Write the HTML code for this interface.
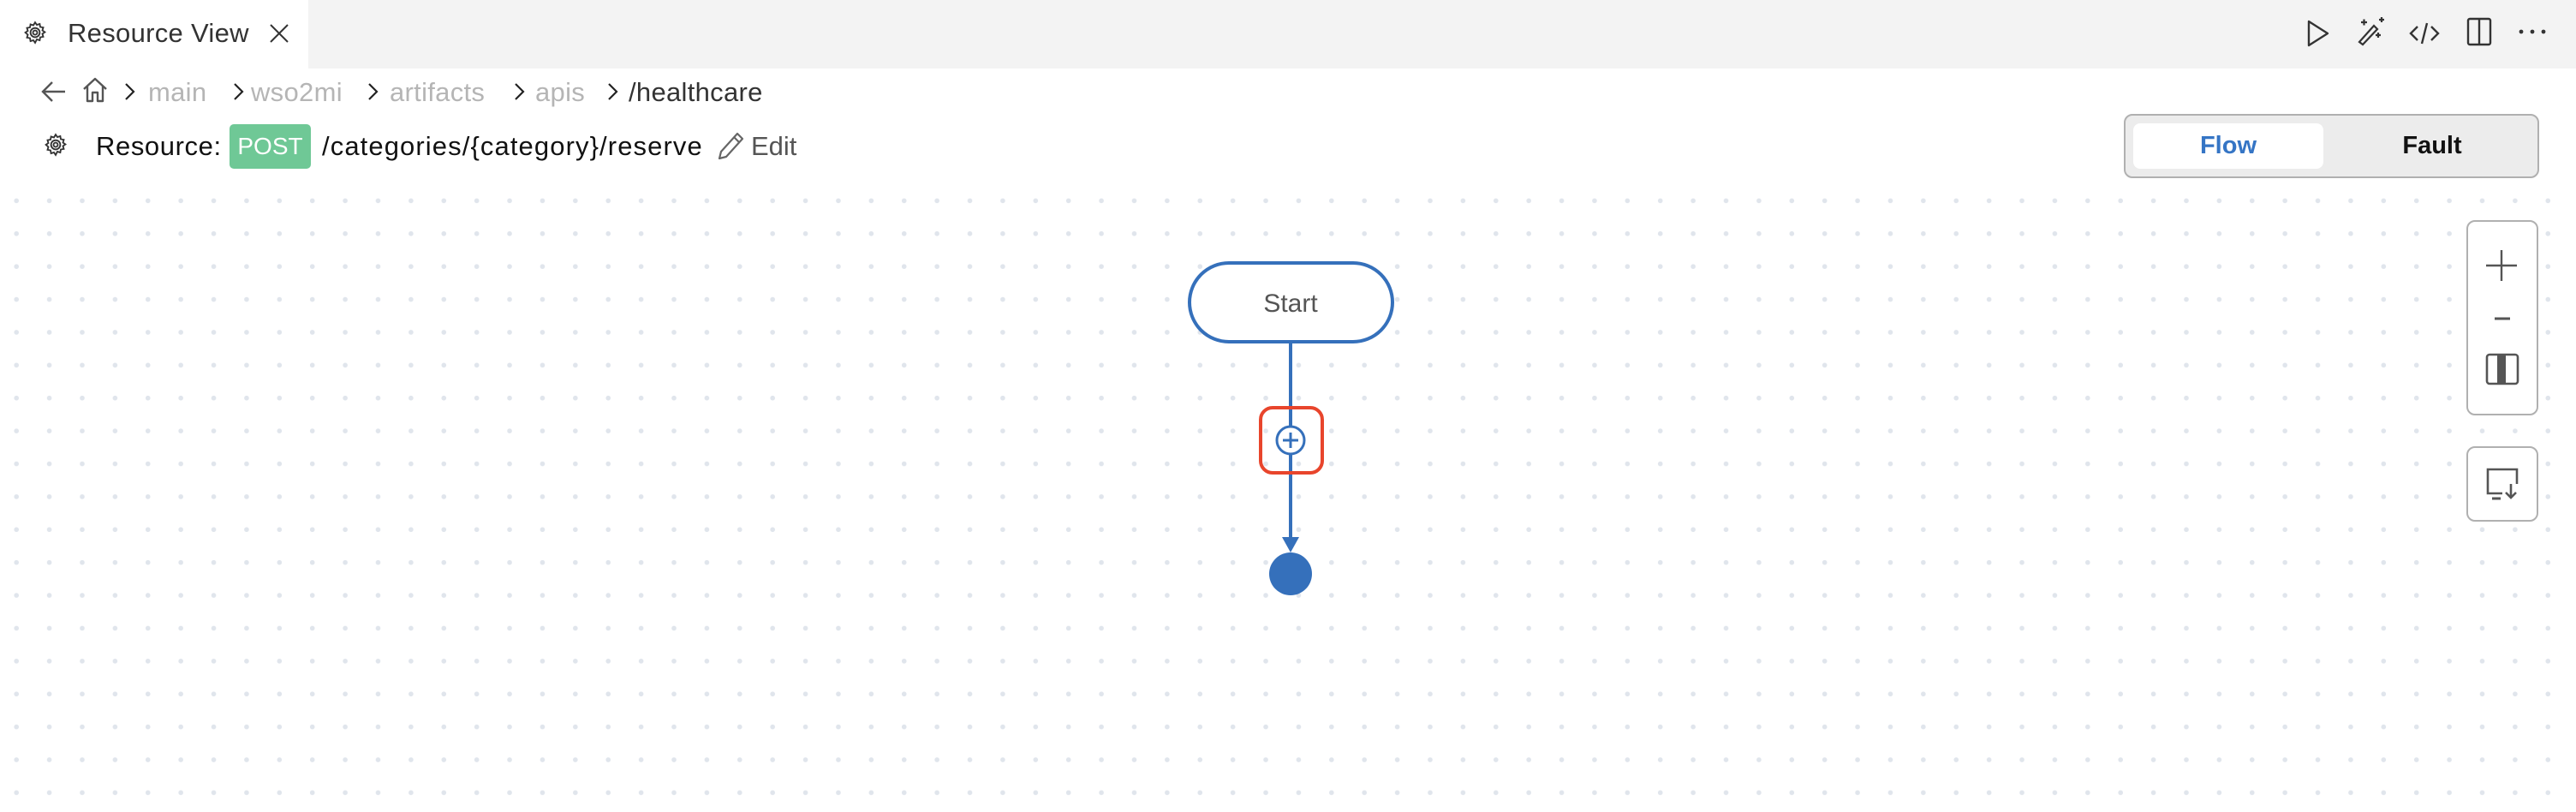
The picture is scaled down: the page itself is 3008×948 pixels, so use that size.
<!DOCTYPE html>
<html><head><meta charset="utf-8"><style>
*{margin:0;padding:0;box-sizing:border-box}
body{width:3008px;height:948px;overflow:hidden;background:#fff;font-family:"Liberation Sans",sans-serif;position:relative}
.abs{position:absolute}
#tabbar{left:0;top:0;width:3008px;height:80px;background:#f3f3f3}
#tab{left:0;top:0;width:360px;height:80px;background:#fff}
#canvas{left:0;top:216px;width:3008px;height:732px;background-image:radial-gradient(circle,#e0e5ec 2.6px,transparent 3px);background-size:38.4px 38.4px;background-position:0px -0.8px}
.t{white-space:nowrap;line-height:1}
</style></head><body>
<div id="canvas" class="abs"></div>
<div id="tabbar" class="abs"></div>
<div id="tab" class="abs"></div>
<svg class="abs" style="left:26px;top:23px" width="30" height="30" viewBox="0 0 24 24" fill="none" stroke="#333" stroke-width="1.5"><path d="M12 2.5l1.6 2.3 2.7-.8.5 2.8 2.8.5-.8 2.7 2.3 1.6-2.3 1.6.8 2.7-2.8.5-.5 2.8-2.7-.8L12 21.5l-1.6-2.3-2.7.8-.5-2.8-2.8-.5.8-2.7L2.9 12l2.3-1.6-.8-2.7 2.8-.5.5-2.8 2.7.8z"/><circle cx="12" cy="12" r="4.3"/><circle cx="12" cy="12" r="2"/></svg>
<div class="abs t" style="left:79px;top:23px;font-size:31px;color:#333;letter-spacing:0.3px">Resource View</div>
<svg class="abs" style="left:314px;top:27px" width="24" height="24" viewBox="0 0 24 24" stroke="#333" stroke-width="2"><path d="M2 2L22 22M22 2L2 22"/></svg>
<svg class="abs" style="left:2692px;top:22px" width="30" height="34" viewBox="0 0 30 34" fill="none" stroke="#333" stroke-width="2.4" stroke-linejoin="round"><path d="M4 3L26 17L4 31Z"/></svg>
<svg class="abs" style="left:2752px;top:20px" width="34" height="36" viewBox="0 0 34 36" fill="none" stroke="#333" stroke-width="2.2"><path d="M5 32L22 13L26 17L9 35Z" transform="translate(-2,-3)"/><path d="M5 6h7M8.5 2.5v7M26 3h6M29 0v6M22 21h6M25 18v6"/></svg>
<svg class="abs" style="left:2812px;top:24px" width="38" height="30" viewBox="0 0 38 30" fill="none" stroke="#333" stroke-width="2.4"><path d="M11 7L3 15L11 23M27 7L35 15L27 23M22 3L16 27"/></svg>
<svg class="abs" style="left:2880px;top:20px" width="30" height="34" viewBox="0 0 30 34" fill="none" stroke="#333" stroke-width="2.4"><rect x="2" y="2" width="26" height="30" rx="2"/><path d="M15 2V32"/></svg>
<svg class="abs" style="left:2940px;top:32px" width="34" height="10" viewBox="0 0 34 10" fill="#333"><circle cx="4" cy="5" r="2.4"/><circle cx="17" cy="5" r="2.4"/><circle cx="30" cy="5" r="2.4"/></svg>
<svg class="abs" style="left:48px;top:94px" width="30" height="26" viewBox="0 0 30 26" fill="none" stroke="#555" stroke-width="2.4"><path d="M28 13H3M13 2L2 13L13 24"/></svg>
<svg class="abs" style="left:95px;top:89px" width="32" height="32" viewBox="0 0 32 32" fill="none" stroke="#555" stroke-width="2.4" stroke-linejoin="round"><path d="M3 15L16 3L29 15M7 12V29H13V19H19V29H25V12"/></svg>
<svg class="abs" style="left:0;top:0" width="760" height="130" fill="none" stroke="#222" stroke-width="2.2">
<path d="M147 98L156 107L147 116"/><path d="M274 98L283 107L274 116"/><path d="M431 98L440 107L431 116"/><path d="M602 98L611 107L602 116"/><path d="M711 98L720 107L711 116"/>
</svg>
<div class="abs t" style="left:0;top:92px;font-size:31px;color:#b5b5b5;letter-spacing:0.3px">
<span class="abs" style="left:173px">main</span>
<span class="abs" style="left:293px">wso2mi</span>
<span class="abs" style="left:455px">artifacts</span>
<span class="abs" style="left:625px">apis</span>
<span class="abs" style="left:734px;color:#333">/healthcare</span>
</div>
<svg class="abs" style="left:50px;top:154px" width="30" height="30" viewBox="0 0 24 24" fill="none" stroke="#333" stroke-width="1.5"><path d="M12 2.5l1.6 2.3 2.7-.8.5 2.8 2.8.5-.8 2.7 2.3 1.6-2.3 1.6.8 2.7-2.8.5-.5 2.8-2.7-.8L12 21.5l-1.6-2.3-2.7.8-.5-2.8-2.8-.5.8-2.7L2.9 12l2.3-1.6-.8-2.7 2.8-.5.5-2.8 2.7.8z"/><circle cx="12" cy="12" r="4.3"/><circle cx="12" cy="12" r="2"/></svg>
<div class="abs t" style="left:112px;top:155px;font-size:31px;color:#111;letter-spacing:0.6px">Resource:</div>
<div class="abs" style="left:268px;top:145px;width:95px;height:52px;background:#6fc896;border-radius:5px;color:#fff;font-size:28px;line-height:52px;text-align:center">POST</div>
<div class="abs t" style="left:376px;top:155px;font-size:31px;color:#111;letter-spacing:1.1px">/categories/{category}/reserve</div>
<svg class="abs" style="left:836px;top:152px" width="34" height="36" viewBox="0 0 34 36" fill="none" stroke="#666" stroke-width="2.2" stroke-linejoin="round"><path d="M4 33L6 25L25 4L31 10L12 31Z M21 8L27 14"/></svg>
<div class="abs t" style="left:877px;top:155px;font-size:31px;color:#555">Edit</div>
<div class="abs" style="left:2480px;top:133px;width:485px;height:75px;border:2px solid #b0b0b0;border-radius:10px;background:#ececec"></div>
<div class="abs" style="left:2491px;top:144px;width:222px;height:53px;background:#fff;border-radius:8px"></div>
<div class="abs t" style="left:2491px;top:156px;width:222px;text-align:center;font-size:29px;font-weight:bold;color:#3575c5">Flow</div>
<div class="abs t" style="left:2740px;top:156px;width:200px;text-align:center;font-size:29px;font-weight:bold;color:#111">Fault</div>
<svg class="abs" style="left:0;top:0" width="3008" height="948">
<rect x="1389" y="307" width="237" height="92" rx="46" fill="#fff" stroke="#3570bb" stroke-width="4"/>
<text x="1507" y="364" text-anchor="middle" font-family="Liberation Sans" font-size="30" fill="#555">Start</text>
<line x1="1507" y1="400" x2="1507" y2="630" stroke="#3570bb" stroke-width="4"/>
<path d="M1497 627L1517 627L1507 645Z" fill="#3570bb"/>
<circle cx="1507" cy="670" r="25" fill="#3570bb"/>
<rect x="1472" y="476" width="72" height="76" rx="14" fill="none" stroke="#e8452c" stroke-width="4"/>
<circle cx="1507" cy="514" r="16" fill="#fff" stroke="#3570bb" stroke-width="3"/>
<path d="M1507 505V523M1498 514H1516" stroke="#3570bb" stroke-width="3"/>
</svg>
<div class="abs" style="left:2880px;top:257px;width:84px;height:228px;border:2px solid #b0b0b0;border-radius:10px;background:#fff"></div>
<svg class="abs" style="left:2902px;top:291px" width="38" height="38" viewBox="0 0 38 38" stroke="#555" stroke-width="2.4"><path d="M19 1V37M1 19H37"/></svg>
<svg class="abs" style="left:2913px;top:370px" width="18" height="4"><path d="M0 2H18" stroke="#555" stroke-width="3"/></svg>
<svg class="abs" style="left:2902px;top:412px" width="40" height="38" viewBox="0 0 40 38"><rect x="2" y="2" width="36" height="34" rx="3" fill="#fff" stroke="#555" stroke-width="2.6"/><rect x="14" y="2" width="10" height="34" fill="#555"/></svg>
<div class="abs" style="left:2880px;top:521px;width:84px;height:88px;border:2px solid #b0b0b0;border-radius:10px;background:#fff"></div>
<svg class="abs" style="left:2902px;top:545px" width="40" height="40" viewBox="0 0 40 40" fill="none" stroke="#555" stroke-width="2.6"><path d="M20 31H3V3H37V20"/><path d="M8 37H18" stroke-width="3"/><path d="M30 20V36M24 30L30 36L36 30"/></svg>
</body></html>
